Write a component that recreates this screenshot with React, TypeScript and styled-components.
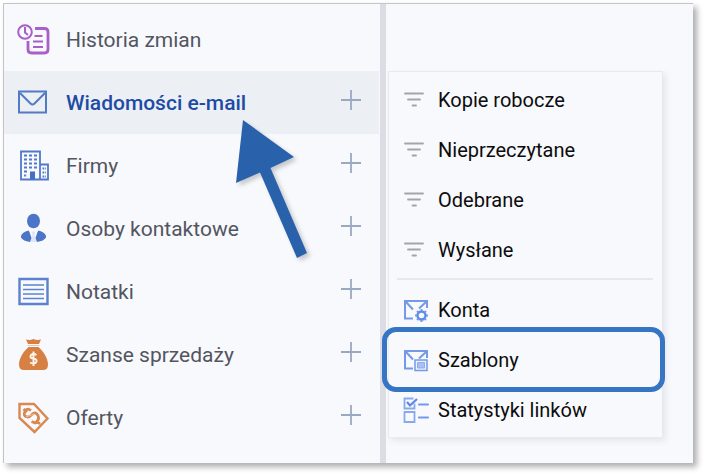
import React from "react";
import styled, { createGlobalStyle } from "styled-components";

const GlobalStyle = createGlobalStyle`
  * { box-sizing: border-box; }
  body {
    margin: 0;
    background: #ffffff;
    font-family: Roboto, "Liberation Sans", sans-serif;
  }
`;

const Frame = styled.main`
  display: flex;
  margin: 3px 12px 12px 3px;
  border-top: 1px solid #c4c5c9;
  border-left: 1px solid #c4c5c9;
  background: #f8f9fd;
  box-shadow: 4px 4px 6px rgba(0, 0, 0, 0.32);
`;

const Sidebar = styled.nav`
  flex: 0 1 376px;
  padding: 4px 1px 14px 0;
`;

const Divider = styled.div`
  flex: 0 0 6px;
  background: #dcdde4;
`;

const Content = styled.section`
  flex: 1;
  min-width: 0;
  padding: 67px 30px 25px 2px;
`;

const List = styled.ul`
  margin: 0;
  padding: 0;
  list-style: none;
`;

const SideRow = styled.li<{ $active?: boolean }>`
  position: relative;
  display: flex;
  align-items: center;
  height: 63px;
  padding: 0 18px 0 12px;
  background: ${(p) => (p.$active ? "#eceff4" : "transparent")};
`;

const SideLink = styled.a<{ $active?: boolean }>`
  flex: 1;
  display: flex;
  align-items: center;
  gap: 16px;
  color: ${(p) => (p.$active ? "#1d4ba5" : "#53555f")};
  font-size: 21px;
  font-weight: ${(p) => (p.$active ? 500 : 400)};
  line-height: 28px;
  white-space: nowrap;
  text-decoration: none;
`;

const AddButton = styled.button`
  display: flex;
  padding: 0 0 5px;
  border: 0;
  background: none;
  color: #9aa8c2;
  cursor: pointer;
`;

const Icon = styled.svg`
  flex: none;
  display: block;
  overflow: visible;
`;

const Arrow = styled.svg`
  position: absolute;
  top: 49px;
  left: 232px;
  z-index: 1;
  overflow: visible;
  pointer-events: none;
  filter: drop-shadow(3px 3px 2px rgba(0, 0, 0, 0.2));
`;

const Menu = styled.nav`
  padding: 3px 0 2px;
  border: 1px solid #e9eaee;
  background: #f8f9fc;
  box-shadow: 3px 3px 6px rgba(60, 60, 80, 0.09);
`;

const MenuRow = styled.li<{ $highlighted?: boolean }>`
  position: relative;
  height: 50px;

  &::after {
    content: "";
    display: ${(p) => (p.$highlighted ? "block" : "none")};
    position: absolute;
    inset: -8px -3px -7px -7px;
    border: 5px solid #3575c3;
    border-radius: 14px;
    pointer-events: none;
  }
`;

const MenuLink = styled.a`
  display: flex;
  align-items: center;
  gap: 8px;
  height: 100%;
  padding-left: 13px;
  color: #0c0c0e;
  font-size: 20px;
  line-height: 26px;
  white-space: nowrap;
  text-decoration: none;
`;

const Separator = styled.hr`
  height: 2px;
  margin: 3px 9px 5px 8px;
  border: 0;
  background: #e7e8eb;
`;

function HistoryIcon() {
  return (
    <Icon width="34" height="34" viewBox="0 0 34 34" fill="none" stroke="#a95fc9" strokeWidth="2.2">
      <path d="M19 5.500H28.500Q32 5.500 32 9V26.500Q32 30 28.500 30H15.500Q12 30 12 26.500V18" strokeWidth="2.800" />
      <circle cx="9" cy="9" r="6.800" strokeWidth="2" />
      <path d="M9 4V9.500L12 12" strokeWidth="2" />
      <path d="M18.500 13H26.500M17 18.500H27M17 24H27" />
    </Icon>
  );
}

function MailIcon() {
  return (
    <Icon width="34" height="34" viewBox="0 0 34 34" fill="none" stroke="#537bc5" strokeWidth="2">
      <path d="M3 5.500H30V26.500H3Z" />
      <path d="M4 7L14.500 17.500Q16.500 19.500 18.500 17.500L29 7" />
    </Icon>
  );
}

function CompanyIcon() {
  return (
    <Icon width="34" height="34" viewBox="0 0 34 34" fill="none" stroke="#5079c9" strokeWidth="1.8">
      <path d="M5 2.500H24V30.500H5ZM24 15.500H32V30.500H24" />
      <path d="M8 6.500H21M8 10.500H21M8 14.500H21M8 18.500H21M8 22.500H12" strokeWidth="2" strokeDasharray="3 2" />
      <path d="M8 26.500H11M26.500 19.500H30M26.500 23.500H30M26.500 27.500H30" strokeWidth="2" strokeDasharray="1.800 1" />
      <path d="M14 22.500H19V30.500H14Z" fill="#426fc4" stroke="none" />
    </Icon>
  );
}

function PersonIcon() {
  return (
    <Icon width="34" height="34" viewBox="0 0 34 34" fill="#4b75c7">
      <ellipse cx="17.500" cy="9" rx="6.500" ry="7.300" />
      <path d="M12.500 18.500Q6 20 5 24V25.500Q7 29 14 30L15.500 26L13.500 20ZM22.500 18.500Q29 20 30 24V25.500Q28 29 21 30L19.500 26L21.500 20Z" />
      <path d="M15.500 19.500H19.500L18.500 22.500L20.500 30H14.500L16.500 22.500Z" opacity="0.150" />
    </Icon>
  );
}

function NoteIcon() {
  return (
    <Icon width="34" height="34" viewBox="0 0 34 34" fill="none" stroke="#5b82ce">
      <path d="M3.500 4H31.500V29H3.500Z" strokeWidth="2.400" />
      <path d="M7 10H28M7 14.500H28M7 19H28M7 23.500H28" strokeWidth="1.600" />
    </Icon>
  );
}

function MoneyIcon() {
  return (
    <Icon width="34" height="34" viewBox="0 0 34 34">
      <path d="M10 1.500Q14 2.500 17.500 1Q21 2.500 25 1.500L23 6H12ZM12.500 9H22.500C27 13 32 20 32 26.500Q32 32 27 32H8Q3 32 3 26.500C3 20 8 13 12.500 9Z" fill="#d68043" />
      <path d="M11.500 7.500H23.500" stroke="#edc6aa" strokeWidth="1" />
      <path d="M20.500 17Q17.500 15 15 17Q13 20 17.500 20.500Q22 21.500 20 24.500Q17.500 26.500 14 24.500M17.500 13.500V28" fill="none" stroke="#fff5ed" strokeWidth="1.900" />
    </Icon>
  );
}

function OfferIcon() {
  return (
    <Icon width="34" height="34" viewBox="0 0 34 34" fill="none" stroke="#d98850">
      <path d="M3.500 3H18L31.500 17.500L18.500 31L3.500 17Z" strokeWidth="2.400" />
      <path d="M15 9.500Q11 6.500 9 10.500Q6.500 15 11.500 16Q14 16 16 13.500Q19.500 10 22 14.500Q24 19 19 22L15.500 20.500M7.500 8L11 11M20.500 20L24 23" strokeWidth="2.800" />
      <path d="M10 16L18 13" stroke="#efc4a6" strokeWidth="1" />
    </Icon>
  );
}

function PlusIcon() {
  return (
    <Icon width="20" height="20" viewBox="0 0 20 20" fill="none" stroke="currentColor" strokeWidth="1.800">
      <path d="M10 0V20M0 10H20" />
    </Icon>
  );
}

function FilterIcon() {
  return (
    <Icon width="28" height="28" viewBox="0 0 28 28" fill="none" stroke="#a4a5a8" strokeWidth="1.800" strokeLinecap="round">
      <path d="M3 7.500H21M6 13.500H18M10.500 19.500H14" />
    </Icon>
  );
}

function Envelope() {
  return (
    <>
      <path d="M11 22.500H3V5H25V12" />
      <path d="M4 6L11 13.500M24 6L17 12.500" />
    </>
  );
}

function AccountsIcon() {
  return (
    <Icon width="28" height="28" viewBox="0 0 28 28" fill="none" stroke="#7399e8" strokeWidth="2">
      <Envelope />
      <circle cx="19.500" cy="19.500" r="4" stroke="#5f8ce7" strokeWidth="2.400" />
      <path d="M19.500 13V15M19.500 24V26M13 19.500H15M24 19.500H26M15 15L16.500 16.500M22.500 22.500L24 24M24 15L22.500 16.500M16.500 22.500L15 24" />
    </Icon>
  );
}

function TemplatesIcon() {
  return (
    <Icon width="28" height="28" viewBox="0 0 28 28" fill="none" stroke="#7399e8" strokeWidth="2">
      <Envelope />
      <path d="M13 14H25V24.500H13Z" fill="#eef3fd" strokeWidth="1.500" />
      <path d="M15.500 16.500H22.500V22H15.500Z" fill="#a9c1f2" stroke="#8eadee" strokeWidth="1" />
    </Icon>
  );
}

function StatisticsIcon() {
  return (
    <Icon width="28" height="28" viewBox="0 0 28 28" fill="none" stroke="#88a9eb" strokeWidth="1.800">
      <path d="M11.500 2.500H2.500V12.500H12.500V7.500M2.500 16H12.500V26H2.500Z" />
      <path d="M5 6L8 9.500L15 3" stroke="#5b88e2" strokeWidth="2.200" />
      <path d="M17 8.500H26M17 21.500H26" stroke="#719aeb" strokeWidth="2.200" strokeLinecap="round" />
    </Icon>
  );
}

const sections = [
  { label: "Historia zmian", icon: HistoryIcon, expandable: false },
  { label: "Wiadomości e-mail", icon: MailIcon, expandable: true, active: true },
  { label: "Firmy", icon: CompanyIcon, expandable: true },
  { label: "Osoby kontaktowe", icon: PersonIcon, expandable: true },
  { label: "Notatki", icon: NoteIcon, expandable: true },
  { label: "Szanse sprzedaży", icon: MoneyIcon, expandable: true },
  { label: "Oferty", icon: OfferIcon, expandable: true },
];

const folders = ["Kopie robocze", "Nieprzeczytane", "Odebrane", "Wysłane"];

const tools = [
  { label: "Konta", icon: AccountsIcon },
  { label: "Szablony", icon: TemplatesIcon, highlighted: true },
  { label: "Statystyki linków", icon: StatisticsIcon },
];

export default function App() {
  return (
    <>
      <GlobalStyle />
      <Frame>
        <Sidebar>
          <List>
            {sections.map(({ label, icon: SectionIcon, expandable, active }) => (
              <SideRow key={label} $active={active}>
                <SideLink href="#" $active={active} aria-current={active ? "page" : undefined}>
                  <SectionIcon />
                  {label}
                </SideLink>
                {expandable && (
                  <AddButton type="button" aria-label={label}>
                    <PlusIcon />
                  </AddButton>
                )}
                {active && (
                  <Arrow width="72" height="139" viewBox="0 0 72 139" aria-hidden="true">
                    <path d="M7 0L58 37L34.500 48L71 133L61 138L24 52.500L0 63Z" fill="#2962ab" />
                  </Arrow>
                )}
              </SideRow>
            ))}
          </List>
        </Sidebar>
        <Divider />
        <Content>
          <Menu>
            <List>
              {folders.map((label) => (
                <MenuRow key={label}>
                  <MenuLink href="#">
                    <FilterIcon />
                    {label}
                  </MenuLink>
                </MenuRow>
              ))}
            </List>
            <Separator />
            <List>
              {tools.map(({ label, icon: ToolIcon, highlighted }) => (
                <MenuRow key={label} $highlighted={highlighted}>
                  <MenuLink href="#">
                    <ToolIcon />
                    {label}
                  </MenuLink>
                </MenuRow>
              ))}
            </List>
          </Menu>
        </Content>
      </Frame>
    </>
  );
}
